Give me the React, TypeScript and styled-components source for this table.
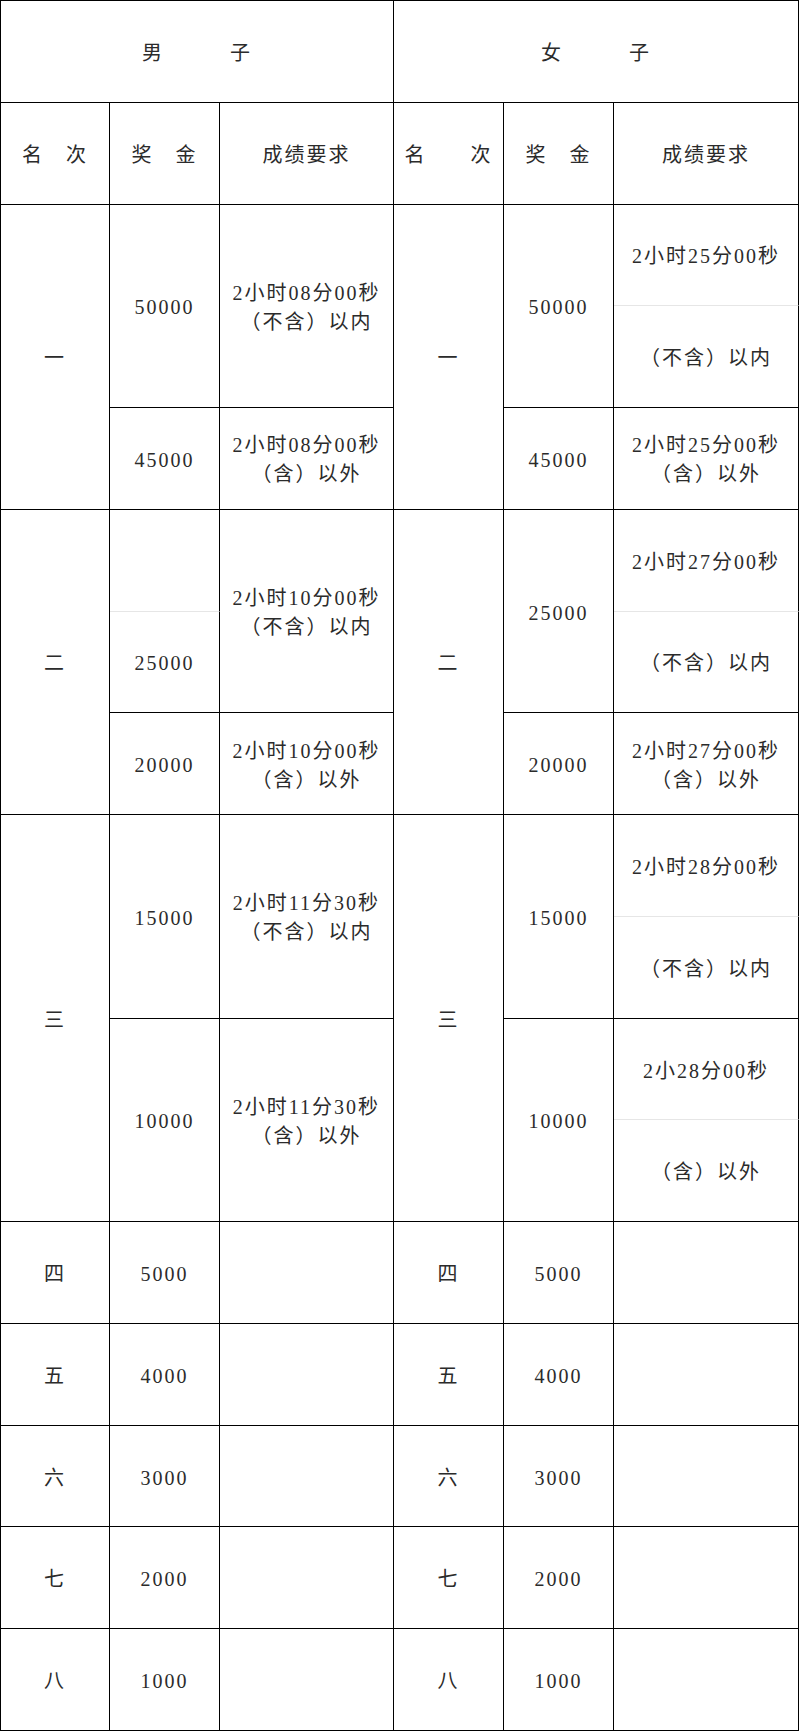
import React from "react"
import styled, { createGlobalStyle } from "styled-components"

const GlobalStyle = createGlobalStyle`
  html,
  body {
    margin: 0;
    padding: 0;
    background: #fff;
  }
  body {
    font-family: "Liberation Serif", "Noto Sans CJK SC", serif;
  }
`

// six columns: men (rank, prize, requirement), women (rank, prize, requirement)
const Table = styled.div`
  display: grid;
  grid-template-columns: 109px 110px 174px 110px 110px 185px;
  grid-template-rows: repeat(17, 1fr);
  width: 799px;
  height: 1731px;
  box-sizing: border-box;
  border-top: 1px solid #000;
  border-left: 1px solid #000;
  color: #2b2b2b;
  font-size: 20px;
  letter-spacing: 2px;
  line-height: 29px;
`

const Cell = styled.div<{ $rows?: number; $cols?: number; $soft?: boolean }>`
  grid-column: span ${(p) => p.$cols ?? 1};
  grid-row: span ${(p) => p.$rows ?? 1};
  display: flex;
  flex-direction: column;
  align-items: center;
  justify-content: center;
  text-align: center;
  box-sizing: border-box;
  min-width: 0;
  padding-top: 4px;
  border-right: 1px solid #000;
  border-bottom: 1px solid ${(p) => (p.$soft ? "#e6e6e6" : "#000")};
`

const Line = styled.span`
  display: block;
  white-space: nowrap;
`

const Rule = ({ time, note }: { time: string; note: string }) => (
  <Cell $rows={2}>
    <Line>{time}</Line>
    <Line>{note}</Line>
  </Cell>
)

const Short = ({ time, note }: { time: string; note: string }) => (
  <Cell>
    <Line>{time}</Line>
    <Line>{note}</Line>
  </Cell>
)

const lower = [
  ["四", "5000"],
  ["五", "4000"],
  ["六", "3000"],
  ["七", "2000"],
  ["八", "1000"],
]

const App = () => {
  return (
    <>
      <GlobalStyle />
      <Table>
        <Cell $cols={3}>男　　　子</Cell>
        <Cell $cols={3}>女　　　子</Cell>

        <Cell>名　次</Cell>
        <Cell>奖　金</Cell>
        <Cell>成绩要求</Cell>
        <Cell>名　　次</Cell>
        <Cell>奖　金</Cell>
        <Cell>成绩要求</Cell>

        {/* 第一名 */}
        <Cell $rows={3}>一</Cell>
        <Cell $rows={2}>50000</Cell>
        <Rule time="2小时08分00秒" note="（不含）以内" />
        <Cell $rows={3}>一</Cell>
        <Cell $rows={2}>50000</Cell>
        <Cell $soft>2小时25分00秒</Cell>
        <Cell>（不含）以内</Cell>
        <Cell>45000</Cell>
        <Short time="2小时08分00秒" note="（含）以外" />
        <Cell>45000</Cell>
        <Short time="2小时25分00秒" note="（含）以外" />

        {/* 第二名 */}
        <Cell $rows={3}>二</Cell>
        <Cell $soft />
        <Rule time="2小时10分00秒" note="（不含）以内" />
        <Cell $rows={3}>二</Cell>
        <Cell $rows={2}>25000</Cell>
        <Cell $soft>2小时27分00秒</Cell>
        <Cell>25000</Cell>
        <Cell>（不含）以内</Cell>
        <Cell>20000</Cell>
        <Short time="2小时10分00秒" note="（含）以外" />
        <Cell>20000</Cell>
        <Short time="2小时27分00秒" note="（含）以外" />

        {/* 第三名 */}
        <Cell $rows={4}>三</Cell>
        <Cell $rows={2}>15000</Cell>
        <Rule time="2小时11分30秒" note="（不含）以内" />
        <Cell $rows={4}>三</Cell>
        <Cell $rows={2}>15000</Cell>
        <Cell $soft>2小时28分00秒</Cell>
        <Cell>（不含）以内</Cell>
        <Cell $rows={2}>10000</Cell>
        <Rule time="2小时11分30秒" note="（含）以外" />
        <Cell $rows={2}>10000</Cell>
        <Cell $soft>2小28分00秒</Cell>
        <Cell>（含）以外</Cell>

        {lower.map(([rank, prize]) => (
          <React.Fragment key={rank}>
            <Cell>{rank}</Cell>
            <Cell>{prize}</Cell>
            <Cell />
            <Cell>{rank}</Cell>
            <Cell>{prize}</Cell>
            <Cell />
          </React.Fragment>
        ))}
      </Table>
    </>
  )
}

export default App
